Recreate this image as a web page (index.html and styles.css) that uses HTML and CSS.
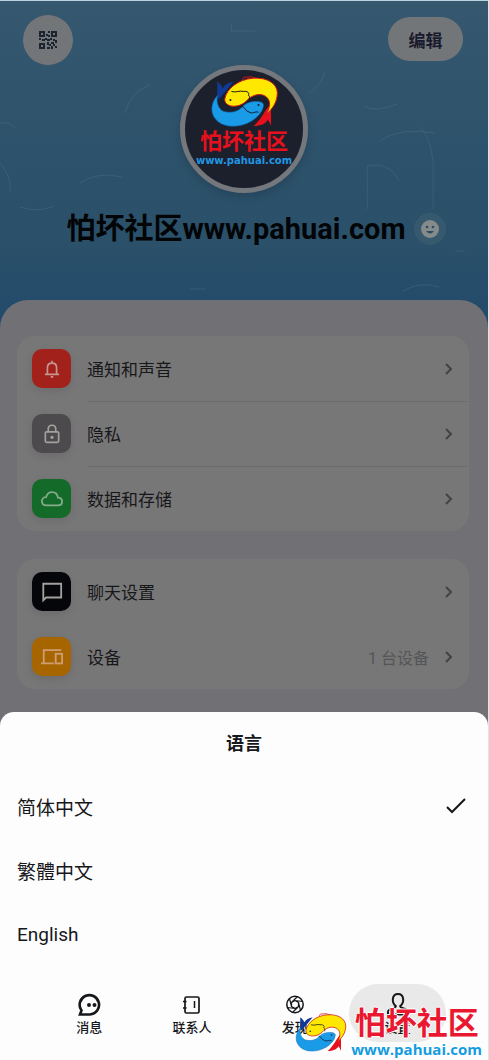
FILE: index.html
```html
<!DOCTYPE html>
<html lang="zh-CN">

<head>
    <meta charset="UTF-8">
    <meta name="viewport" content="width=device-width, initial-scale=1.0">
    <title>设置</title>
    <link rel="stylesheet" href="styles.css">
</head>

<body>
    <!-- 公用图形 -->
    <svg class="defs" aria-hidden="true">
        <symbol id="fish" viewBox="112 56 212 162">
            <path d="M215 76C211 68 218 63 228 65C239 61 250 67 262 70" fill="none" stroke="#d8101c" stroke-width="3" />
            <path d="M137 78C146 84 151 91 153 99C160 87 171 81 187 78C176 90 168 103 153 118C147 127 140 134 137 128Z" fill="#103a94" />
            <path d="M296 148L300 164V213C297 205 294 198 290 194C283 207 268 213 247 213C261 200 273 184 283 166Z" fill="#e8101c" />
            <path d="M160 130C165 100 200 72 245 68C290 65 318 85 319 112C319 140 305 160 285 178C298 155 300 137 285 124C268 112 245 118 230 132C215 150 195 155 178 152C164 148 158 140 160 130Z" fill="#ffe800" stroke="#c8141c" stroke-width="3" />
            <path d="M277 148C277 165 262 185 240 198C210 216 165 220 140 200C118 182 115 155 130 130L138 120C133 140 140 160 155 168C175 175 200 170 213 155C225 140 250 136 268 140C274 142 277 145 277 148Z" fill="#1a9be8" stroke="#1268b0" stroke-width="2" />
            <path d="M180 108C194 113 205 104 216 108C228 106 236 113 231 119C238 123 232 130 236 134M211 153C222 155 221 168 233 170C242 178 252 167 262 171" fill="none" stroke="#14181f" stroke-width="3" />
            <circle cx="177" cy="134" r="3" fill="#14181f" />
            <circle cx="262" cy="149" r="3" fill="#14181f" />
        </symbol>
        <symbol id="chevron" viewBox="0 0 8 12">
            <path d="M1 1L6 6L1 11" fill="none" stroke="currentColor" stroke-width="2" />
        </symbol>
    </svg>

    <div class="page">
        <header class="hero">
            <svg class="doodle" viewBox="0 0 489 300" preserveAspectRatio="none" aria-hidden="true">
                <path d="M0 122Q8 120 15 127M0 162Q12 176 10 190M125 112Q132 90 150 84M368 208V165Q390 160 400 180M434 208V160Q430 132 420 126M380 140Q400 126 436 132M365 105Q375 112 398 103M232 22V30H256M20 206Q40 212 54 205M80 182Q98 170 122 176M404 290Q420 280 440 286M456 250H466M310 92Q322 84 326 70M190 288H206" />
            </svg>
            <div class="toolbar">
                <button class="qr-btn" aria-label="二维码">
                    <svg width="18" height="18" viewBox="0 0 18 18">
                        <path d="M1 1h4v4H1zM13 1h4v4h-4zM1 13h4v4H1z" fill="none" stroke="currentColor" stroke-width="2" />
                        <path d="M9 0h2v2H9zM7 3h2v2H7zM9 4h2v2H9zM0 7h2v2H0zM3 8h3v2H3zM6 7h2v2H6zM8 8h3v2H8zM11 7h2v2h-2zM14 8h2v2h-2zM16 9h2v3h-2zM8 11h2v3H8zM10 13h2v2h-2zM12 11h3v2h-3zM14 13h2v2h-2zM8 16h3v2H8zM12 15h2v3h-2zM16 15h2v2h-2z" fill="currentColor" />
                    </svg>
                </button>
                <button class="edit-btn">编辑</button>
            </div>
            <div class="avatar">
                <svg class="avatar-fish"><use href="#fish" /></svg>
                <strong>怕坏社区</strong>
                <span>www.pahuai.com</span>
            </div>
            <div class="profile">
                <h1>怕坏社区www.pahuai.com</h1>
                <button class="mood" aria-label="心情">
                    <svg width="18" height="18" viewBox="0 0 18 18">
                        <circle cx="9" cy="9" r="9" fill="#858a8b" />
                        <circle cx="6" cy="7" r="1.3" fill="#2c4c61" />
                        <circle cx="12" cy="7" r="1.3" fill="#2c4c61" />
                        <path d="M5 11h8Q9 16 5 11Z" fill="#2c4c61" />
                    </svg>
                </button>
            </div>
        </header>

        <main class="settings">
            <section class="card lined">
                <button class="row">
                    <span class="icon small red">
                        <svg viewBox="0 0 24 24"><path d="M3.500 18.500H20.500M6.500 18V10.500C6.500 7 8.500 5 12 5S17.500 7 17.500 10.500V18M12 5V2M10.500 21.500H13.500" /></svg>
                    </span>
                    <span class="label">通知和声音</span>
                    <svg class="arrow"><use href="#chevron" /></svg>
                </button>
                <button class="row">
                    <span class="icon small gray">
                        <svg viewBox="0 0 24 24"><rect x="4" y="9.500" width="16" height="12.500" rx="1.500" /><path d="M7.500 9V6Q7.500 1.500 12 1.500T16.500 6V9" /><circle cx="12" cy="16" r="1" /></svg>
                    </span>
                    <span class="label">隐私</span>
                    <svg class="arrow"><use href="#chevron" /></svg>
                </button>
                <button class="row">
                    <span class="icon green">
                        <svg viewBox="0 0 24 24"><path d="M6 19C2.800 19 1 17 1 14.500C1 12 2.800 10 5.500 10C6.500 6.500 9 4.500 12 4.500C15.500 4.500 18 7 18.500 10.500C21.500 10.500 23 12.300 23 14.700C23 17.200 21.300 19 18.500 19Z" /></svg>
                    </span>
                    <span class="label">数据和存储</span>
                    <svg class="arrow"><use href="#chevron" /></svg>
                </button>
            </section>

            <section class="card">
                <button class="row">
                    <span class="icon black">
                        <svg viewBox="0 0 24 24"><path d="M2.500 21V3H22V18H5.500Z" /></svg>
                    </span>
                    <span class="label">聊天设置</span>
                    <svg class="arrow"><use href="#chevron" /></svg>
                </button>
                <button class="row">
                    <span class="icon orange">
                        <svg viewBox="0 0 24 24"><path d="M3 18V4.500H22M0 19H14" /><rect x="16" y="8.500" width="7" height="10.500" /></svg>
                    </span>
                    <span class="label">设备</span>
                    <span class="value">1 台设备</span>
                    <svg class="arrow"><use href="#chevron" /></svg>
                </button>
            </section>
        </main>

        <section class="sheet">
            <h2>语言</h2>
            <label class="option">
                <span>简体中文</span>
                <input type="radio" name="lang" checked>
                <svg class="check" viewBox="0 0 20 16"><path d="M1 9L6 14L19 1" /></svg>
            </label>
            <label class="option">
                <span>繁體中文</span>
                <input type="radio" name="lang">
                <svg class="check" viewBox="0 0 20 16"><path d="M1 9L6 14L19 1" /></svg>
            </label>
            <label class="option">
                <span>English</span>
                <input type="radio" name="lang">
                <svg class="check" viewBox="0 0 20 16"><path d="M1 9L6 14L19 1" /></svg>
            </label>
        </section>

        <nav class="tabs">
            <a class="tab" href="#">
                <svg viewBox="0 0 24 24"><path d="M3 22.500L4.500 18.500A9.700 9.700 0 1 1 13 22.500Z" stroke-width="2.600" /><circle cx="12" cy="13" r="1" /><circle cx="17.500" cy="13" r="1" /></svg>
                消息
            </a>
            <a class="tab" href="#">
                <svg viewBox="0 0 24 24"><rect x="5" y="5" width="14" height="16" rx="1.500" stroke-width="1.700" /><path d="M14.500 9V16M3 9.500H6.500M3 16H6.500" stroke-width="1.500" /></svg>
                联系人
            </a>
            <a class="tab" href="#">
                <svg viewBox="0 0 24 24"><circle cx="12" cy="12.500" r="8.200" stroke-width="1.500" /><path d="M8.500 10.500L14.500 4.500M12 8.500L19.500 9.500M15.500 10.500L17.500 18.500M15.500 14.500L9.500 20.500M12 16.500L4.500 15.500M8.500 14.500L6.500 6.500M12 8.500L8.500 10.500V14.500L12 16.500L15.500 14.500V10.500Z" stroke-width="1.200" /></svg>
                发现
            </a>
            <a class="tab active" href="#">
                <svg viewBox="0 0 24 24"><path d="M9.800 14C5.500 11 5.500 2 12 2S18.500 11 14.200 14C14 17 22 16 22 20V22.500H2V20C2 16 10 17 9.800 14Z" /></svg>
                设置
            </a>
        </nav>

        <div class="watermark">
            <svg class="mark-fish"><use href="#fish" /></svg>
            <div class="mark-text">
                <strong>怕坏社区</strong>
                <span>www.pahuai.com</span>
            </div>
        </div>
    </div>
</body>

</html>
```

FILE: styles.css
```css
* {
    margin: 0;
    padding: 0;
    box-sizing: border-box;
}

body {
    font-family: Roboto, "Noto Sans CJK SC", sans-serif;
    color: #15171b;
    background-color: #fdfdfd;
}

button {
    border: 0;
    background: none;
    font: inherit;
    color: inherit;
    cursor: pointer;
}

.defs {
    position: absolute;
    width: 0;
    height: 0;
}

.page {
    position: relative;
    min-height: 100vh;
    border-right: 1px solid #dfe6ea;
    overflow: hidden;
}

/* 头部 */
.hero {
    position: relative;
    height: 328px;
    border-top: 1px solid #b9d3df;
    background: linear-gradient(#35586f, #2d526b 45%, #2a506a 75%, #224a6a);
}

.doodle {
    position: absolute;
    width: 100%;
    height: 300px;
    fill: none;
    stroke: #5b7f96;
    stroke-opacity: .3;
}

.toolbar {
    position: relative;
    display: flex;
    justify-content: space-between;
    padding: 14px 25px 0 23px;
    height: 64px;
}

.qr-btn {
    display: flex;
    align-items: center;
    justify-content: center;
    width: 50px;
    height: 50px;
    border-radius: 50%;
    background-color: #737679;
    color: #1c2431;
}

.edit-btn {
    width: 75px;
    height: 44px;
    margin-top: 2px;
    border-radius: 22px;
    background-color: #737679;
    color: #1a1b2c;
    font-size: 17px;
    font-weight: bold;
}

.avatar {
    position: relative;
    display: flex;
    flex-direction: column;
    align-items: center;
    width: 128px;
    height: 128px;
    margin: 0 auto;
    padding-top: 4px;
    border: 5px solid #74787c;
    border-radius: 50%;
    background-color: #1b202c;
    box-shadow: 0 4px 10px rgba(0, 0, 0, .15);
}

.avatar-fish {
    width: 70px;
    height: 54px;
}

.avatar strong {
    font-size: 22px;
    line-height: 28px;
    color: #e8101c;
}

.avatar span {
    font: bold 10px/10px "DejaVu Sans", sans-serif;
    color: #2196e3;
}

.profile {
    position: relative;
    display: flex;
    align-items: center;
    justify-content: center;
    gap: 8px;
    margin-top: 20px;
    padding-left: 24px;
}

.profile h1 {
    font-size: 29px;
    line-height: 32px;
    color: #020405;
    white-space: nowrap;
}

.mood {
    display: flex;
    align-items: center;
    justify-content: center;
    width: 32px;
    height: 32px;
    border-radius: 50%;
    background-color: #36596e;
}

/* 设置列表 */
.settings {
    position: relative;
    margin-top: -28px;
    padding: 36px 19px 37px 17px;
    border-radius: 28px 28px 0 0;
    background-color: #717175;
}

.card {
    border-radius: 18px;
    background-color: #777778;
}

.card + .card {
    margin-top: 28px;
}

.row {
    display: flex;
    align-items: center;
    position: relative;
    width: 100%;
    height: 65px;
    padding: 0 16px 0 15px;
    color: #17171a;
    font-size: 17px;
    text-align: left;
}

.lined .row + .row::before {
    content: "";
    position: absolute;
    top: 0;
    left: 70px;
    right: 2px;
    height: 1px;
    background-color: #6c6c6e;
}

.icon {
    display: flex;
    align-items: center;
    justify-content: center;
    width: 39px;
    height: 39px;
    border-radius: 10px;
    box-shadow: 0 3px 8px rgba(0, 0, 0, .1);
}

.icon svg {
    width: 22px;
    height: 22px;
    fill: none;
    stroke: #a3a09e;
    stroke-width: 2;
}

.icon.small svg {
    width: 20px;
    height: 20px;
}

.red {
    background-color: #a3211b;
}

.gray {
    background-color: #4c4a4c;
}

.green {
    background-color: #146a28;
}

.black {
    background-color: #050609;
}

.orange {
    background-color: #a76500;
}

.red svg {
    stroke: #c69592;
}

.green svg {
    stroke: #83ab8a;
}

.orange svg {
    stroke: #d09d73;
}

.label {
    flex: 1;
    margin-left: 16px;
}

.value {
    margin-right: 16px;
    font-size: 16px;
    color: #555557;
}

.arrow {
    width: 8px;
    height: 12px;
    color: #434345;
}

/* 语言弹层 */
.sheet {
    position: relative;
    margin-top: -14px;
    padding-top: 2px;
    border-radius: 14px 14px 0 0;
    background-color: #fdfdfd;
}

.sheet h2 {
    font-size: 18px;
    line-height: 60px;
    text-align: center;
}

.option {
    display: flex;
    align-items: center;
    justify-content: space-between;
    height: 64px;
    padding: 0 22px 0 17px;
    font-size: 19px;
    cursor: pointer;
}

.option input {
    appearance: none;
}

.check {
    width: 20px;
    height: 16px;
    fill: none;
    stroke: #15171b;
    stroke-width: 2;
    visibility: hidden;
}

.option input:checked + .check {
    visibility: visible;
}

/* 底部导航 */
.tabs {
    display: flex;
    gap: 6px;
    padding: 18px 42px 18px 41px;
}

.tab {
    display: flex;
    flex: 1;
    flex-direction: column;
    align-items: center;
    height: 58px;
    padding-top: 8px;
    border-radius: 29px;
    color: #15171b;
    font-size: 13px;
    font-weight: 500;
    line-height: 24px;
    text-decoration: none;
}

.tab svg {
    width: 24px;
    height: 24px;
    fill: none;
    stroke: currentColor;
    stroke-width: 2;
}

.tab.active {
    background-color: #e9e9ea;
}

/* 水印 */
.watermark {
    position: absolute;
    right: 6px;
    bottom: 3px;
    display: flex;
    align-items: center;
    gap: 4px;
    pointer-events: none;
}

.mark-fish {
    width: 53px;
    height: 50px;
}

.mark-text {
    display: flex;
    flex-direction: column;
    align-items: center;
    text-shadow: 1px 0 #fff, -1px 0 #fff, 0 1px #fff, 0 -1px #fff;
}

.mark-text strong {
    font-size: 31px;
    line-height: 34px;
    color: #ea1730;
}

.mark-text span {
    font: bold 15px/16px "Open Sans", sans-serif;
    color: #159be0;
}
```
